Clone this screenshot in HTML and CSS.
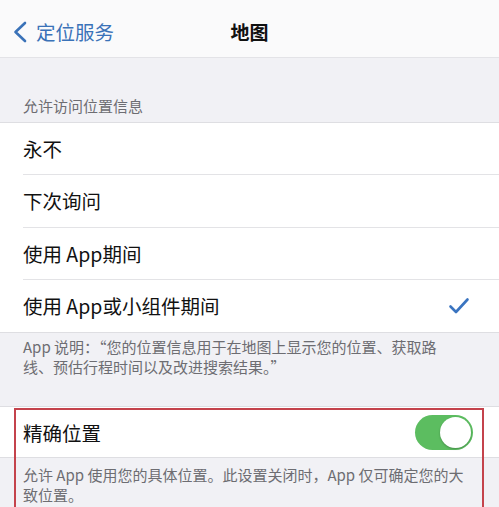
FILE: index.html
```html
<!DOCTYPE html>
<html lang="zh-Hans">
<head>
<meta charset="utf-8">
<link rel="stylesheet" href="styles.css">
</head>
<body>
<div class="page">
  <header class="nav">
    <div class="back">
      <svg class="chev" width="16" height="22" viewBox="0 0 16 22"><path d="M13 2 L3.5 11 L13 20" fill="none" stroke="#3a72b8" stroke-width="2.6" stroke-linecap="round" stroke-linejoin="round"/></svg>
      <span class="back-label">定位服务</span>
    </div>
    <div class="title">地图</div>
  </header>

  <div class="group-header">允许访问位置信息</div>
  <ul class="list">
    <li class="row">永不</li>
    <li class="row">下次询问</li>
    <li class="row">使用 App期间</li>
    <li class="row">使用 App或小组件期间
      <svg class="check" width="22" height="18" viewBox="0 0 22 18"><path d="M2.5 9.5 L8 15 L19.5 2.5" fill="none" stroke="#3a74c0" stroke-width="2.6" stroke-linecap="round" stroke-linejoin="round"/></svg>
    </li>
  </ul>
  <p class="group-footer">App 说明：“您的位置信息用于在地图上显示您的位置、获取路<br>线、预估行程时间以及改进搜索结果。”</p>

  <div class="group2">
    <ul class="list">
      <li class="row">精确位置
        <span class="toggle"><span class="knob"></span></span>
      </li>
    </ul>
    <p class="group-footer footer2">允许 App 使用您的具体位置。此设置关闭时，App 仅可确定您的大<br>致位置。</p>
    <div class="highlight"></div>
  </div>
</div>
</body>
</html>
```

FILE: styles.css
```css
* { box-sizing: border-box; }
html, body {
  margin: 0;
  padding: 0;
  background: #f1f1f5;
  font-family: "Noto Sans CJK SC", "Noto Sans", sans-serif;
  overflow: hidden;
}
.page {
  width: 499px;
  height: 507px;
  overflow: hidden;
}
.nav {
  height: 58px;
  background: #fafafb;
  border-bottom: 1px solid #e3e3e7;
  display: flex;
  align-items: center;
  position: relative;
  padding-left: 12px;
}
.back {
  display: flex;
  align-items: center;
  gap: 8px;
  color: #3a72b8;
  font-size: 19.5px;
  margin-top: 6px;
}
.chev { display: block; }
.title {
  position: absolute;
  left: 0;
  right: 0;
  top: 0;
  bottom: 0;
  display: flex;
  align-items: center;
  justify-content: center;
  padding-top: 6px;
  font-size: 19px;
  font-weight: 700;
  color: #111;
  pointer-events: none;
}
.group-header {
  height: 64px;
  display: flex;
  align-items: flex-end;
  padding: 0 23px 6px;
  font-size: 15px;
  line-height: 20px;
  color: #6d6d72;
}
.list {
  list-style: none;
  margin: 0;
  padding: 0 0 0 23px;
  background: #fff;
  border-top: 1px solid #dedee2;
  border-bottom: 1px solid #dedee2;
}
.row {
  height: 52.25px;
  display: flex;
  align-items: center;
  justify-content: space-between;
  padding-right: 29px;
  font-size: 19.5px;
  color: #111;
  border-bottom: 1px solid #e3e3e6;
}
.row:last-child { border-bottom: none; }
.group-footer {
  margin: 0;
  padding: 4px 23px 0;
  font-size: 15px;
  line-height: 20px;
  color: #6d6d72;
}
.group2 {
  position: relative;
  margin-top: 29px;
}
.group2 .row {
  height: 50px;
  padding-right: 26px;
}
.footer2 { padding-top: 7px; }
.toggle {
  width: 58px;
  height: 35px;
  border-radius: 18px;
  background: #5cbd60;
  position: relative;
  flex: none;
}
.knob {
  position: absolute;
  right: 2px;
  top: 2px;
  width: 31px;
  height: 31px;
  border-radius: 50%;
  background: #fff;
  box-shadow: 0 1px 2px rgba(0,0,0,0.25);
}
.highlight {
  position: absolute;
  left: 14px;
  top: 2px;
  width: 470px;
  height: 140px;
  border: 2px solid #c4434c;
  pointer-events: none;
}
```
